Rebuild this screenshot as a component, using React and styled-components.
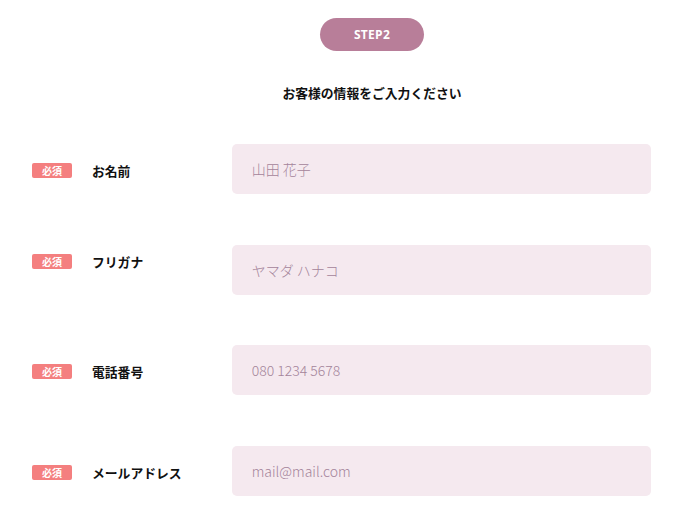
import styled, { createGlobalStyle } from "styled-components";

const GlobalStyle = createGlobalStyle`
  body {
    margin: 0;
    background: #fff;
    font-family: "Noto Sans CJK JP", "Noto Sans", sans-serif;
  }
`;

const fields = [
    {label: "お名前", placeholder: "山田 花子", offset: 1},
    {label: "フリガナ", placeholder: "ヤマダ ハナコ", offset: -8},
    {label: "電話番号", placeholder: "080 1234 5678", offset: 1},
    {label: "メールアドレス", placeholder: "mail@mail.com", offset: 2},
];

const App = () => {
    return (
        <>
            <GlobalStyle/>
            <Page>
                <Header>
                    <StepPill>STEP2</StepPill>
                    <Heading>お客様の情報をご入力ください</Heading>
                </Header>
                <FormList>
                    {fields.map((item) => (
                        <Row key={item.label}>
                            <LabelBox $offset={item.offset}>
                                <Required>必須</Required>
                                <Label>{item.label}</Label>
                            </LabelBox>
                            <Input placeholder={item.placeholder}/>
                        </Row>
                    ))}
                </FormList>
            </Page>
        </>
    );
};

const Page = styled.div`
  width: 673px;
  height: 511px;
  overflow: hidden;
  display: flex;
  flex-direction: column;
  padding-top: 18px;
  box-sizing: border-box;
`;
// the header is centred on a wider column than the window
const Header = styled.div`
  width: 744px;
  flex-shrink: 0;
  display: flex;
  flex-direction: column;
  align-items: center;
`;
const StepPill = styled.div`
  width: 104px;
  height: 33px;
  border-radius: 17px;
  background: #b87e99;
  color: #fff;
  font-family: "Open Sans", "Noto Sans", sans-serif;
  font-weight: 700;
  font-size: 12px;
  display: flex;
  align-items: center;
  justify-content: center;
  letter-spacing: 0.3px;
`;
const Heading = styled.h2`
  margin: 33px 0 0 0;
  font-size: 12.8px;
  font-weight: 700;
  color: #111;
  line-height: 18px;
`;
const FormList = styled.div`
  width: 100%;
  margin-top: 42px;
  display: flex;
  flex-direction: column;
  gap: 50.5px;
`;
const Row = styled.div`
  display: flex;
  align-items: center;
  padding: 0 22px 0 32px;
`;
const LabelBox = styled.div`
  width: 200px;
  display: flex;
  align-items: center;
  transform: translateY(${({$offset}) => $offset}px);
`;
const Required = styled.span`
  width: 40px;
  height: 15px;
  border-radius: 2px;
  background: #f47f7f;
  color: #fff;
  font-size: 10px;
  font-weight: 700;
  display: flex;
  align-items: center;
  justify-content: center;
  margin-right: 20px;
`;
const Label = styled.span`
  font-size: 12.8px;
  font-weight: 700;
  color: #111;
`;
const Input = styled.input`
  width: 420px;
  height: 50px;
  box-sizing: border-box;
  border: none;
  border-radius: 5px;
  background: #f5e9ef;
  padding: 0 20px;
  font-family: "Noto Sans CJK JP", "Noto Sans", sans-serif;
  font-size: 14px;
  font-weight: 300;
  outline: none;
  &::placeholder {
    color: #a4849a;
  }
`;

export default App;
